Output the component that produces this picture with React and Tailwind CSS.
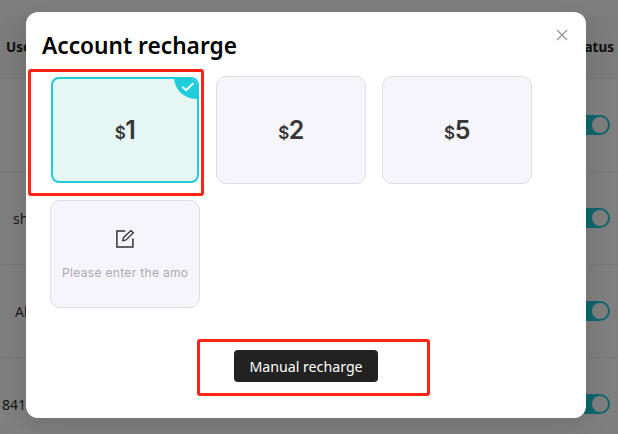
import React from "react";

const rows = [
  { user: "", pad: "pl-[14px]" },
  { user: "shop", pad: "pl-[13px]" },
  { user: "Alan", pad: "pl-[15px]" },
  { user: "84139", pad: "pl-[2px]" },
];

function Toggle() {
  return (
    <span className="flex h-5 w-10 items-center justify-end rounded-full bg-[#20ccda] pr-0.5">
      <span className="h-4 w-4 rounded-full bg-white" />
    </span>
  );
}

function TablePage() {
  return (
    <div className="h-full w-full bg-white pt-4 text-[14px] text-[#303133]">
      <div className="flex h-[63px] items-center justify-between border-b border-[#ebeef5] bg-[#f8f8f8] pl-[6px] pr-1 text-[13.5px] font-bold text-[#222]">
        <span>User</span>
        <span>Status</span>
      </div>
      {rows.map((row, i) => (
        <div key={i} className="flex h-[93px] items-center justify-between border-b border-[#ebeef5] pr-2">
          <span className={row.pad}>{row.user}</span>
          <Toggle />
        </div>
      ))}
    </div>
  );
}

function Amount({ value, selected }) {
  return (
    <div
      className={
        selected
          ? "relative m-px flex h-[106px] w-[148px] items-center justify-center overflow-hidden rounded-lg border-2 border-[#20ccda] bg-[#e6f6f5]"
          : "flex h-[108px] w-[150px] items-center justify-center rounded-[10px] border border-[#dcdfe6] bg-[#f6f5fb]"
      }
    >
      <div className="flex items-baseline font-[Inter,sans-serif] leading-none text-[#363636]">
        <span className="text-[17px] font-semibold tracking-[-0.5px]">$</span>
        <span className="text-[25px] font-semibold tracking-[-0.5px]">{value}</span>
      </div>
      {selected && (
        <span className="absolute -right-0.5 -top-0.5 h-[22px] w-[25px] rounded-bl-[22px] bg-[#20ccda]">
          <svg className="absolute left-[7px] top-[5px]" width="14" height="11" viewBox="0 0 14 11" fill="none" stroke="white" strokeWidth="1.9">
            <path d="M1.3 4.8 5 8.3 12.4 1.2" />
          </svg>
        </span>
      )}
    </div>
  );
}

function CustomAmount() {
  return (
    <div className="flex h-[108px] w-[150px] flex-col items-center rounded-[10px] border border-[#dcdfe6] bg-[#f6f5fb] pt-[28px]">
      <svg width="20" height="20" viewBox="0 0 20 20" fill="none" stroke="#333" strokeWidth="1.5">
        <path d="M10.4 2.1H1.9v16h16V9.6" />
        <path d="M7.7 11.9l.8-3.5L16 1.6l2.3 2.1-7.2 7.2z" strokeWidth="1.3" strokeLinejoin="round" />
      </svg>
      <div className="mt-[15px] w-[126px] overflow-hidden whitespace-nowrap font-[Inter,sans-serif] text-[12px] leading-[18px] tracking-[0.33px] text-[#a8a9ae]">
        Please enter the amo
      </div>
    </div>
  );
}

export default function App() {
  return (
    <div className="relative h-[434px] w-[618px] overflow-hidden font-['Noto_Sans',sans-serif]">
      <TablePage />
      <div className="absolute inset-0 bg-black/50" />
      <div className="absolute left-[26px] top-3 flex h-[406px] w-[560px] flex-col rounded-xl bg-white shadow-[0_6px_28px_rgba(0,0,0,0.13)]">
        <div className="flex h-16 items-start justify-between pl-4 pr-[18px] pt-[17px]">
          <h1 className="whitespace-nowrap text-[22.7px] font-semibold leading-[34px] text-black">Account recharge</h1>
          <svg width="12" height="12" viewBox="0 0 12 12" stroke="#909399" strokeWidth="1.2">
            <path d="M1 1l10 10M11 1 1 11" />
          </svg>
        </div>
        <div className="grid grid-cols-[150px_150px_150px] gap-4 pl-6">
          <Amount value="1" selected />
          <Amount value="2" />
          <Amount value="5" />
          <CustomAmount />
        </div>
        <div className="mt-[42px] flex justify-center">
          <button className="h-8 w-36 whitespace-nowrap rounded bg-[#222] pt-0.5 text-[14.2px] text-white">Manual recharge</button>
        </div>
      </div>
      <div className="absolute left-[28px] top-[69px] h-[127px] w-[176px] rounded-[3px] border-[3px] border-[#ff2215]" />
      <div className="absolute left-[197px] top-[339px] h-[57px] w-[233px] rounded-[3px] border-[3px] border-[#ff2215]" />
    </div>
  );
}
